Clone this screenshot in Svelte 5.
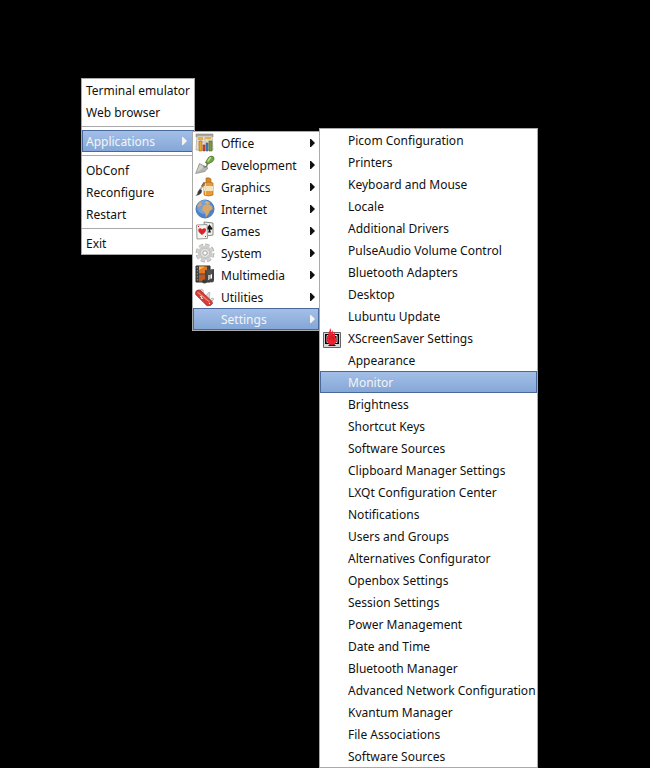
<script lang="ts">
    type Entry = { label: string; icon?: string; submenu?: boolean; active?: boolean };

    const root: Entry[][] = [
        [{ label: 'Terminal emulator' }, { label: 'Web browser' }],
        [{ label: 'Applications', submenu: true, active: true }],
        [{ label: 'ObConf' }, { label: 'Reconfigure' }, { label: 'Restart' }],
        [{ label: 'Exit' }],
    ];

    const applications: Entry[][] = [[
        { label: 'Office', icon: 'office', submenu: true },
        { label: 'Development', icon: 'development', submenu: true },
        { label: 'Graphics', icon: 'graphics', submenu: true },
        { label: 'Internet', icon: 'internet', submenu: true },
        { label: 'Games', icon: 'games', submenu: true },
        { label: 'System', icon: 'system', submenu: true },
        { label: 'Multimedia', icon: 'multimedia', submenu: true },
        { label: 'Utilities', icon: 'utilities', submenu: true },
        { label: 'Settings', submenu: true, active: true },
    ]];

    const settings: Entry[][] = [[
        { label: 'Picom Configuration' },
        { label: 'Printers' },
        { label: 'Keyboard and Mouse' },
        { label: 'Locale' },
        { label: 'Additional Drivers' },
        { label: 'PulseAudio Volume Control' },
        { label: 'Bluetooth Adapters' },
        { label: 'Desktop' },
        { label: 'Lubuntu Update' },
        { label: 'XScreenSaver Settings', icon: 'xscreensaver' },
        { label: 'Appearance' },
        { label: 'Monitor', active: true },
        { label: 'Brightness' },
        { label: 'Shortcut Keys' },
        { label: 'Software Sources' },
        { label: 'Clipboard Manager Settings' },
        { label: 'LXQt Configuration Center' },
        { label: 'Notifications' },
        { label: 'Users and Groups' },
        { label: 'Alternatives Configurator' },
        { label: 'Openbox Settings' },
        { label: 'Session Settings' },
        { label: 'Power Management' },
        { label: 'Date and Time' },
        { label: 'Bluetooth Manager' },
        { label: 'Advanced Network Configuration' },
        { label: 'Kvantum Manager' },
        { label: 'File Associations' },
        { label: 'Software Sources' },
    ]];

    let menus = $state([
        { name: 'root', title: 'Desktop menu', groups: root, icons: false },
        { name: 'applications', title: 'Applications', groups: applications, icons: true },
        { name: 'settings', title: 'Settings', groups: settings, icons: true },
    ]);

    function highlight(menu: number, entry: Entry) {
        for (const group of menus[menu].groups) {
            for (const e of group) e.active = e === entry;
        }
    }
</script>

{#snippet picture(name: string)}
    <svg class="icon" viewBox="0 0 20 20" aria-hidden="true">
        {#if name === 'office'}
            <path d="M1 1h17v3H1z" fill="#a9a69e" stroke="#8b887f" stroke-width=".6" />
            <path d="M2 3h15l1 14H1z" fill="#e6e2d6" stroke="#aaa59a" stroke-width=".7" />
            <path d="M3 6h13M3 9h13M3 12h13M6 4v12M10 4v12M14 4v12" stroke="#bfbaab" stroke-width=".6" />
            <path d="M3 4h5v3H3zM10 4h6v2h-6z" fill="#e9ad43" />
            <path d="M4 8h3v10H4z" fill="#e9a52c" stroke="#a66c14" stroke-width=".6" />
            <path d="M8 12h2v6H8z" fill="#d3482b" stroke="#8c2413" stroke-width=".5" />
            <path d="M11 10h2v8h-2z" fill="#477dbb" stroke="#284f80" stroke-width=".5" />
            <path d="M14 8h3v10h-3z" fill="#7a9f42" stroke="#4a6826" stroke-width=".6" />
        {:else if name === 'development'}
            <path d="M.7 18.500L4.500 8.500l8.500 4.500-3 3.500z" fill="#b4b6b2" stroke="#858783" stroke-width=".7" />
            <path d="M1.500 17.800L5 9.500l4 2.500z" fill="#cfd0cc" />
            <path d="M8.500 11.500Q13 13 12 7.500" fill="none" stroke="#777975" stroke-width="1.500" />
            <path d="M10.500 7.500L13.500 2.500Q16 0 18.700 2q1 2-1 4.500L13 9z" fill="#75a745" stroke="#456f25" stroke-width=".8" />
            <path d="M13 6l2.500-3.500" stroke="#bcdb91" stroke-width="1.500" stroke-linecap="round" />
        {:else if name === 'graphics'}
            <path d="M11 1q3-1 5 1v4h-5z" fill="#d88a28" stroke="#a45d15" stroke-width=".6" />
            <path d="M9 6q4-2 9 0v12q-4 2-9 0z" fill="#e89b37" stroke="#a86a24" stroke-width=".7" />
            <path d="M9 9h9v5H9z" fill="#f5e3bc" />
            <path d="M10.500 6v12" stroke="#ffd391" />
            <path d="M9.500 6L5 13" stroke="#b4b6b3" stroke-width="2.200" />
            <path d="M9.500 5.500L7 9.500" stroke="#8c6742" stroke-width="2" />
            <path d="M5 12l2 1.500Q6.500 18 1 18.500q2-2 2-4z" fill="#343634" stroke="#777" stroke-width=".4" />
        {:else if name === 'internet'}
            <circle cx="10" cy="10" r="9" fill="#4a83c6" stroke="#477ab6" />
            <circle cx="9" cy="8" r="7" fill="#83afe2" opacity=".7" />
            <path d="M2.500 7q1-3 4-4.500L6 5l1 1-3 2zM8 7l4-2 3 1 2 1 .5 3-3 2-1 3-2.500 3-1-5-3-1z" fill="#d9a66b" stroke="#c69b6c" stroke-width=".3" />
            <path d="M11 2l4 1.500-2 1.500-3-1z" fill="#dfb17c" />
        {:else if name === 'games'}
            <path d="M9 1l9 1v12l-7 1z" fill="#f0f0ed" stroke="#888a85" />
            <path d="M14.500 3.500l3 4q-.5 2-2.500 1l1 3h-3l1-3q-2 1-2.500-1z" fill="#171717" />
            <path d="M1.500 4L12 3.500 12.500 17.500 2 18z" fill="#f4f4f2" stroke="#92938f" stroke-width=".9" />
            <path d="M7 14Q1.500 10 4 7.500 6 6.500 7 8.500q1.500-2 3.500-1Q12.500 10 7 14z" fill="#d9232b" />
            <path d="M3 5h1v1H3zM10 15h1v1h-1z" fill="#c22" />
        {:else if name === 'system'}
            <circle cx="10" cy="10" r="7.700" fill="none" stroke="#a0a09e" stroke-width="3.400" stroke-dasharray="4 2.048" />
            <circle cx="10" cy="10" r="7.500" fill="none" stroke="#d5d5d3" stroke-width="2.600" stroke-dasharray="3.600 2.290" />
            <circle cx="10" cy="10" r="5.700" fill="#d9d9d7" stroke="#cdcdcb" stroke-width="3" />
            <circle cx="10" cy="10" r="4.700" fill="#e2e2e0" stroke="#b2b2b0" stroke-width=".6" />
            <circle cx="10" cy="10" r="2.200" fill="#fff" stroke="#a0a09e" />
        {:else if name === 'multimedia'}
            <path d="M1 1h14v16H1z" fill="#444542" stroke="#2f302e" />
            <path d="M4 1.500h8v7H4z" fill="#e87820" />
            <path d="M4 9.500h8v7H4z" fill="#bd5b22" />
            <path d="M4 5l6-3.500H4z" fill="#f8b65d" />
            <path d="M2.300 2v15" stroke="#a5a59e" stroke-width=".8" stroke-dasharray="1.500 1.500" />
            <path d="M10 5l9-1v5l-9 1z" fill="#50524f" />
            <path d="M11 16V6M18 15V5" stroke="#454744" stroke-width="2" />
            <path d="M13 10h3v5h-3z" fill="#b9bab7" />
            <ellipse cx="9.500" cy="16.500" rx="2.500" ry="2" fill="#3b3c3a" />
            <ellipse cx="16.500" cy="15.500" rx="2.500" ry="2" fill="#454744" />
        {:else if name === 'utilities'}
            <path d="M4 6l2-4 2 1 1 5zM10 10l4-5 1 1-1 6zM13 14l4-3 2 1-4 4z" fill="#dedfdd" stroke="#a9aba8" stroke-width=".7" />
            <path d="M3 3Q0 3.500 .7 7.500L12 18.700q3.500.8 5.500-2.200 0-2-2-3.500L6 4Q4.500 2.500 3 3z" fill="#d63c37" stroke="#a52a26" stroke-width=".8" />
            <path d="M3 5.500l11 9" stroke="#ef817b" stroke-width="1.300" stroke-linecap="round" />
            <path d="M5 9l3 3M6.800 8.800l-.5 3.200" stroke="#f4e2df" stroke-width=".9" />
            <circle cx="14.500" cy="16.500" r=".7" fill="#eee" />
        {:else if name === 'xscreensaver'}
            <path d="M1.500 4.500h17v15h-17z" fill="#d6d6d6" stroke="#656565" />
            <path d="M3 6h14v10H3z" fill="#000" />
            <path d="M5 7.500h10v7H5z" fill="#000" stroke="#eee" />
            <path d="M8 16h4l2 2H6z" fill="#111" />
            <path d="M8 0Q8 3 6.500 4.500 7 6 5.500 8q-2 4 0 6.500 2 2.500 4.500 2.500 3.500-.5 4.500-3.500.5-3-1.500-5 .5-2.500-.5-4.500Q12 6 11 7q1-3-.5-5 0 2-1 3.500Q9.500 2 8 0z" fill="#ef2030" />
            <path d="M8 8v4M10.200 7l-.4 4M12 9l-1 4" stroke="#9e1420" stroke-width=".6" />
        {/if}
    </svg>
{/snippet}

<main class="desktop">
    {#each menus as menu, i (menu.name)}
        <div class="menu {menu.name}" class:with-icons={menu.icons} role="menu" aria-label={menu.title}>
            {#each menu.groups as group, g}
                {#if g > 0}
                    <hr />
                {/if}
                {#each group as entry}
                    <button
                        class="item"
                        class:active={entry.active}
                        role="menuitem"
                        aria-haspopup={entry.submenu ? 'menu' : undefined}
                        onclick={() => highlight(i, entry)}
                    >
                        {#if menu.icons}
                            <span class="slot">
                                {#if entry.icon}{@render picture(entry.icon)}{/if}
                            </span>
                        {/if}
                        <span class="label">{entry.label}</span>
                        {#if entry.submenu}
                            <svg class="arrow" viewBox="0 0 5 8" aria-hidden="true">
                                <path d="M0 0h1l4 4-4 4H0z" fill="currentColor" />
                            </svg>
                        {/if}
                    </button>
                {/each}
            {/each}
        </div>
    {/each}
</main>

<style>
    :global(body) { margin: 0; background: #000; }
    .desktop {
        position: relative;
        min-height: 100vh;
        overflow: hidden;
        background: #000;
        font-family: "Noto Sans", "Open Sans", sans-serif;
        font-size: 12px;
    }
    .menu {
        position: absolute;
        display: flex;
        flex-direction: column;
        border: 1px solid #aaa;
        background: #fff;
    }
    /* each level opens over the edge of the one before it */
    .root { left: 81px; top: 78px; }
    .applications { left: 192px; top: 131px; min-width: 126px; }
    .settings { left: 319px; top: 128px; }
    hr {
        width: 100%;
        height: 1px;
        margin: 3px 0;
        border: none;
        background: #aaa;
    }
    .item {
        display: flex;
        align-items: center;
        height: 22px;
        box-sizing: border-box;
        padding: 0 3px;
        border: 1px solid transparent;
        background: none;
        color: #111;
        font: inherit;
        line-height: 20px;
        text-align: left;
        white-space: nowrap;
    }
    .with-icons .item { padding: 0 0 0 1px; }
    .item.active {
        border-color: #49699b;
        background: linear-gradient(#a5c0e8, #83a6d6) border-box;
        color: #f4f4f4;
    }
    .slot { width: 20px; height: 20px; margin-right: 6px; }
    .icon { display: block; width: 20px; height: 20px; }
    .label { flex: 1; padding-top: 2px; }
    .arrow { width: 5px; height: 8px; margin-right: 3px; }
</style>
